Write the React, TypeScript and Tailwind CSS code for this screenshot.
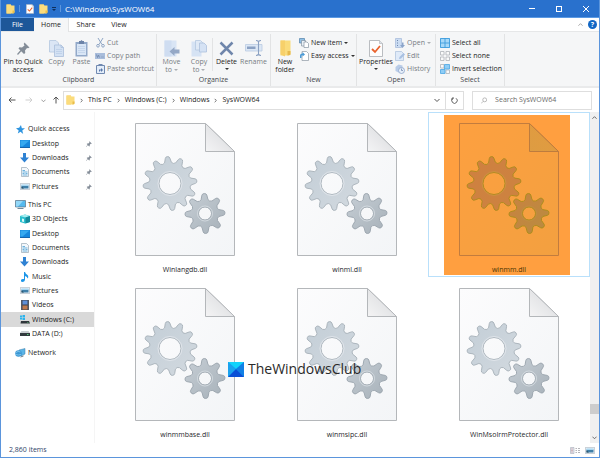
import React from "react";

type IconProps = { className?: string };

/* ---------- small icons ---------- */

const Folder = ({ className = "h-[10px] w-[9px]" }: IconProps) => (
  <svg viewBox="0 0 18 20" className={className}>
    <path d="M1 1h9v18H1z" fill="#f4cf63" />
    <path d="M1 1h8l2 2h6v13l-2 3H1z" fill="#fbdc7c" />
    <path d="M13 13h4v5l-4 1z" fill="#e9bd4a" />
  </svg>
);

const CheckPage = ({ className = "h-[10px] w-[8px]" }: IconProps) => (
  <svg viewBox="0 0 28 34" className={className}>
    <path d="M1 1h20l6 6v26H1z" fill="#fdfdfd" stroke="#a9adb3" strokeWidth="1.6" />
    <path d="M21 1v6h6" fill="#dfe3e8" stroke="#a9adb3" strokeWidth="1.2" />
    <path d="M6 18l6 6 10-12" fill="none" stroke="#e9622d" strokeWidth="3.6" />
  </svg>
);

const Pin = ({ className = "h-[13px] w-[13px]", color = "#848d98" }: IconProps & { color?: string }) => (
  <svg viewBox="0 0 26 26" className={className}>
    <path d="M15 1l10 10-3 1.500-2-.5-4 5 .5 5-2.500 2L3 13l2-2.500 5 .5 5-4-1.500-3z" fill={color} />
    <path d="M9 16L1 25" stroke={color} strokeWidth="2.400" />
  </svg>
);

const CopyIcon = () => (
  <svg viewBox="0 0 30 34" className="h-[17px] w-[15px]">
    <path d="M1 1h13l5 5v18H1z" fill="#dbe6f5" stroke="#b3c6e0" strokeWidth="1.600" />
    <path d="M11 10h13l5 5v18H11z" fill="#d3e1f3" stroke="#a9bedb" strokeWidth="1.600" />
    <path d="M24 10v5h5" fill="none" stroke="#a9bedb" strokeWidth="1.500" />
    <path d="M14 19h12M14 23h12M14 27h12" stroke="#b7cbe5" strokeWidth="1.400" />
  </svg>
);

const PasteIcon = () => (
  <svg viewBox="0 0 26 34" className="h-[17px] w-[13px]">
    <path d="M1 4h24v29H1z" fill="#92a9c9" />
    <path d="M4 8h18v22H4z" fill="#d9e6f6" />
    <path d="M8 2h3l2-2 2 2h3v6H8z" fill="#6c83a8" />
    <path d="M6 13h14M6 17h14M6 21h14M6 25h14" stroke="#b9cde6" strokeWidth="1.300" />
  </svg>
);

const Scissors = () => (
  <svg viewBox="0 0 18 20" className="h-[10px] w-[9px]" fill="none" stroke="#8fa5c4" strokeWidth="2">
    <path d="M4 0l8 13M14 0L6 13" />
    <circle cx="4" cy="15.500" r="2.700" />
    <circle cx="14" cy="15.500" r="2.700" />
  </svg>
);

const CopyPathIcon = () => (
  <svg viewBox="0 0 20 12" className="h-[6px] w-[10px]">
    <path d="M0 0h20v12H0z" fill="#a9bddb" />
    <path d="M3 3l2 6 2-5 2 5M12 8h1M15 8h2" stroke="#6a83aa" strokeWidth="1.500" fill="none" />
  </svg>
);

const ShortcutIcon = () => (
  <svg viewBox="0 0 18 20" className="h-[10px] w-[9px]">
    <path d="M1 3h16v16H1z" fill="#e3edf9" stroke="#7089b0" strokeWidth="2" />
    <path d="M5 0h8v4H5z" fill="#7089b0" />
    <path d="M6 15v-4h4V8l4 4-4 4v-3H8v2z" fill="#5877a8" />
  </svg>
);

const MoveToIcon = () => (
  <svg viewBox="0 0 32 34" className="h-[17px] w-[16px]">
    <path d="M1 1h24v32H1z" fill="#d9e5f5" />
    <path d="M1 1h14v32H1z" fill="#cfddf1" />
    <path d="M11 23l10-9v5h10v8H21v5z" fill="#95a8c6" />
  </svg>
);

const CopyToIcon = () => (
  <svg viewBox="0 0 32 34" className="h-[17px] w-[16px]">
    <path d="M1 3h20v30H1z" fill="#d6e3f4" />
    <path d="M9 1h10l4 4v15H9z" fill="#dfe9f6" stroke="#b2c5df" strokeWidth="1.500" />
    <path d="M17 6h9l5 5v13H17z" fill="#d5e2f4" stroke="#a9bedb" strokeWidth="1.500" />
  </svg>
);

const DeleteIcon = () => (
  <svg viewBox="0 0 30 30" className="h-[15px] w-[15px]">
    <path d="M3 3l24 24M27 3L3 27" stroke="#6f86ab" strokeWidth="5" />
  </svg>
);

const RenameIcon = () => (
  <svg viewBox="0 0 36 32" className="h-[16px] w-[18px]">
    <path d="M1 9h33v13H1z" fill="#dce7f5" stroke="#b6c8e0" strokeWidth="1.500" />
    <path d="M4 13h17v5H4z" fill="#8ba1c3" />
    <path d="M22 1q4 0 5 3 1-3 5-3M27 3v26M22 31q4 0 5-3 1 3 5 3" fill="none" stroke="#8ba1c3" strokeWidth="2.200" />
  </svg>
);

const NewFolderIcon = () => (
  <svg viewBox="0 0 22 34" className="h-[17px] w-[11px]">
    <path d="M1 1h20v26l-4 4H1z" fill="#fadb7a" />
    <path d="M1 1h9v32l-9-4z" fill="#f7d06a" />
    <path d="M15 22h6v8l-6 1z" fill="#e7b94c" />
  </svg>
);

const NewItemIcon = () => (
  <svg viewBox="0 0 20 20" className="h-[10px] w-[10px]">
    <path d="M1 1h10v9H1z" fill="#8fc0e6" stroke="#5a87ad" strokeWidth="1.500" />
    <path d="M5 5h8v11H5z" fill="#e9f0f6" stroke="#7f8d9b" strokeWidth="1.300" />
    <path d="M10 8h6l3 3v8h-9z" fill="#fff" stroke="#7f8d9b" strokeWidth="1.300" />
  </svg>
);

const EasyAccessIcon = () => (
  <svg viewBox="0 0 20 20" className="h-[10px] w-[10px]">
    <path d="M6 1h9l4 4v14H6z" fill="#fff" stroke="#8d98a3" strokeWidth="1.400" />
    <path d="M2 14V9q0-4 5-4V2l5 5-5 4V8q-2 0-2 2v4z" fill="#4a9ad6" />
  </svg>
);

const OpenIcon = () => (
  <svg viewBox="0 0 20 20" className="h-[10px] w-[10px]">
    <path d="M1 1h12v18H1z" fill="#cbdcf2" stroke="#9db4d5" strokeWidth="1.300" />
    <path d="M4 5h2M4 10h2M4 15h2" stroke="#6d86ad" strokeWidth="2" />
    <path d="M10 14h4v-5h3v5h3l-5 6z" fill="#8ba4ca" />
  </svg>
);

const EditIcon = () => (
  <svg viewBox="0 0 20 20" className="h-[10px] w-[10px]">
    <path d="M1 1h12l4 4v14H1z" fill="#dfeaf8" stroke="#a9bedb" strokeWidth="1.400" />
    <path d="M8 16l1-4 8-8 3 3-8 8z" fill="#a8c0e2" />
  </svg>
);

const HistoryIcon = () => (
  <svg viewBox="0 0 20 20" className="h-[10px] w-[10px]">
    <path d="M1 6l6-5 8 2v10L7 17l-6-3z" fill="#b9cce8" />
    <circle cx="13" cy="13" r="6" fill="#e7effa" stroke="#8ba4ca" strokeWidth="1.600" />
    <path d="M13 9v4h3" fill="none" stroke="#6d86ad" strokeWidth="1.500" />
  </svg>
);

const SelectAllIcon = () => (
  <svg viewBox="0 0 20 20" className="h-[10px] w-[10px]">
    <path d="M0 0h20v20H0z" fill="#a6d8f8" />
    <path d="M10 0v20M0 10h20M1 1h18v18H1z" fill="none" stroke="#3e9ddd" strokeWidth="1.800" />
  </svg>
);

const SelectNoneIcon = () => (
  <svg viewBox="0 0 20 20" className="h-[10px] w-[10px]" fill="#fafafa" stroke="#aeb3b8" strokeWidth="1.600">
    <path d="M1 1h7v7H1zM12 1h7v7h-7zM1 12h7v7H1zM12 12h7v7h-7z" />
  </svg>
);

const InvertIcon = () => (
  <svg viewBox="0 0 20 20" className="h-[10px] w-[10px]" strokeWidth="1.600">
    <path d="M1 1h7v7H1zM12 12h7v7h-7z" fill="#fafafa" stroke="#aeb3b8" />
    <path d="M9 1h10v9H9zM1 11h9v8H1z" fill="#8fcdf6" stroke="#4aa6e3" />
  </svg>
);

const Arrow = ({ dir, color }: { dir: "left" | "right" | "up"; color: string }) => (
  <svg viewBox="0 0 16 16" className="h-[8px] w-[8px]" fill="none" stroke={color} strokeWidth="2">
    {dir === "left" && <path d="M15 8H2M7 3L2 8l5 5" />}
    {dir === "right" && <path d="M1 8h13M9 3l5 5-5 5" />}
    {dir === "up" && <path d="M8 15V2M3 7l5-5 5 5" />}
  </svg>
);

const Chevron = ({ dir = "down", color = "#555", className = "h-[6px] w-[6px]" }: IconProps & { dir?: "down" | "up" | "right"; color?: string }) => (
  <svg viewBox="0 0 12 12" className={className} fill="none" stroke={color} strokeWidth="2">
    {dir === "down" && <path d="M1 4l5 5 5-5" />}
    {dir === "up" && <path d="M1 9l5-5 5 5" />}
    {dir === "right" && <path d="M4 2l4 4-4 4" />}
  </svg>
);

const Caret = ({ color = "#333" }: { color?: string }) => (
  <svg viewBox="0 0 8 4" className="h-[2px] w-[4px]">
    <path d="M0 0h8L4 4z" fill={color} />
  </svg>
);

/* ---------- navigation icons ---------- */

const StarIcon = () => (
  <svg viewBox="0 0 20 20" className="h-[9px] w-[9px]">
    <path d="M11 0l2 7 7 0-6 5 2 8-6-5-6 4 2-7-6-5 7-1z" fill="#2f95e0" />
  </svg>
);
const DesktopIcon = () => (
  <svg viewBox="0 0 20 16" className="h-[8px] w-[10px]">
    <path d="M0 0h20v15H0z" fill="#1787dd" />
    <path d="M1 1h18L5 13H1z" fill="#36a9f0" />
    <path d="M0 14h20v2H0z" fill="#1565ae" />
  </svg>
);
const DownloadIcon = () => (
  <svg viewBox="0 0 18 20" className="h-[10px] w-[9px]">
    <path d="M6 0h6v9h6l-9 10-9-10h6z" fill="#2f82d3" />
  </svg>
);
const DocumentIcon = () => (
  <svg viewBox="0 0 16 20" className="h-[10px] w-[8px]">
    <path d="M1 1h10l4 4v14H1z" fill="#f4f8fb" stroke="#9aa9b5" strokeWidth="1.400" />
    <path d="M3 7h5M3 10h10M3 13h4M9 13h4M3 16h10" stroke="#55a7d8" strokeWidth="1.700" />
  </svg>
);
const PictureIcon = () => (
  <svg viewBox="0 0 20 14" className="h-[7px] w-[10px]">
    <path d="M.7.700h18.600v12.600H.7z" fill="#e9f2f8" stroke="#aab4bc" strokeWidth="1.300" />
    <path d="M3 5h14v6H3z" fill="#3f7fa8" />
    <path d="M3 3h14v3H3z" fill="#a9d6f0" />
    <path d="M3 11V7l5 4z" fill="#29495c" />
  </svg>
);
const PcIcon = () => (
  <svg viewBox="0 0 22 20" className="h-[10px] w-[11px]">
    <path d="M1 1h20v13H1z" fill="#55b9ee" stroke="#5b7385" strokeWidth="1.400" />
    <path d="M2 2h14L6 13H2z" fill="#93d8f8" />
    <path d="M5 16h12v2H5z" fill="#71899a" />
  </svg>
);
const CubeIcon = () => (
  <svg viewBox="0 0 20 20" className="h-[10px] w-[10px]">
    <path d="M0 4l10-3 10 3v12l-10 3-10-3z" fill="#2cc0cf" />
    <path d="M0 4l10-3 10 3-9 3z" fill="#a5edf0" />
    <path d="M11 7l9-3v12l-9 3z" fill="#138a9c" />
    <path d="M4 9l4 1v6l-4-1z" fill="#d7f7f8" />
  </svg>
);
const MusicIcon = () => (
  <svg viewBox="0 0 16 20" className="h-[10px] w-[8px]">
    <path d="M6 0h2q1 4 5 6 3 3 0 7 0-4-5-5v8q-1 4-5 4t-3-4q1-3 6-2z" fill="#1d96e8" />
  </svg>
);
const VideoIcon = () => (
  <svg viewBox="0 0 16 20" className="h-[10px] w-[8px]">
    <path d="M0 0h16v20H0z" fill="#3a3f4a" />
    <path d="M3 1h10v8H3z" fill="#5f8fd8" />
    <path d="M3 11h10v8H3z" fill="#c07a4e" />
    <path d="M1.500 1v19M14.500 1v19" stroke="#b5bac4" strokeWidth="1.200" strokeDasharray="2 2" />
  </svg>
);
const SystemDriveIcon = () => (
  <svg viewBox="0 0 20 18" className="h-[9px] w-[10px]">
    <path d="M0 1h4v4H0zM5 0h5v5H5zM0 6h4v3H0zM5 6h5v4H5z" fill="#29b3ee" />
    <path d="M2 12h16l2 5H1z" fill="#30363b" />
    <path d="M14 14h3v1h-3z" fill="#58d27a" />
  </svg>
);
const DriveIcon = () => (
  <svg viewBox="0 0 20 10" className="h-[5px] w-[10px]">
    <path d="M3 0h14l3 4H0z" fill="#c9cdd0" />
    <path d="M0 4h20v6H0z" fill="#33393e" />
    <path d="M14 6h3v2h-3z" fill="#58d27a" />
  </svg>
);
const NetworkIcon = () => (
  <svg viewBox="0 0 22 20" className="h-[10px] w-[11px]">
    <path d="M8 4l12-3v11l-8 4z" fill="#5ab4e6" stroke="#3f7ea8" />
    <circle cx="7" cy="11" r="6.500" fill="#3a97d4" />
    <path d="M2 9q4-4 9-1M1 13q6 2 11 0" stroke="#9bd6f5" strokeWidth="1.400" fill="none" />
    <path d="M11 18l6-2" stroke="#70818e" strokeWidth="2" />
  </svg>
);

/* ---------- DLL file artwork ---------- */

function gearPath(cx: number, cy: number, outer: number, root: number, hole: number, teeth: number, offset: number) {
  const at = (r: number, deg: number) => {
    const a = (deg * Math.PI) / 180;
    return `${(cx + r * Math.cos(a)).toFixed(2)} ${(cy + r * Math.sin(a)).toFixed(2)}`;
  };
  const step = 360 / teeth;
  let d = "";
  for (let i = 0; i < teeth; i++) {
    const c = offset + i * step;
    d += `${i === 0 ? "M" : "L"}${at(root + 0.800, c - step * 0.310)}`;
    d += `L${at(outer - 1.500, c - step * 0.170)}`;
    d += `Q${at(outer, c - step * 0.140)} ${at(outer, c)}`;
    d += `Q${at(outer, c + step * 0.140)} ${at(outer - 1.500, c + step * 0.170)}`;
    d += `L${at(root + 0.800, c + step * 0.310)}`;
    d += `Q${at(root - 1, c + step * 0.500)} ${at(root + 0.800, c + step * 0.690)}`;
  }
  return `${d}ZM${cx + hole} ${cy}A${hole} ${hole} 0 1 0 ${cx - hole} ${cy}A${hole} ${hole} 0 1 0 ${cx + hole} ${cy}Z`;
}

const bigGear = gearPath(35, 60.500, 27, 20.500, 11, 12, -5.500);
const smallGear = gearPath(70, 90.500, 20, 13.500, 6.500, 8, -2);

const DllArt = ({ id, marked }: { id: string; marked?: boolean }) => (
  <svg viewBox="0 0 100 133" className="relative h-[133px] w-[100px]">
    <defs>
      <linearGradient id={`${id}-page`} x1="0" y1="0" x2="1" y2="1">
        <stop offset="0" stopColor={marked ? "#fda040" : "#fcfcfd"} />
        <stop offset="1" stopColor={marked ? "#f3a040" : "#f3f5f7"} />
      </linearGradient>
      <linearGradient id={`${id}-fold`} x1="0" y1="1" x2="1" y2="0">
        <stop offset="0" stopColor={marked ? "#dd9c42" : "#f4f4f5"} />
        <stop offset="1" stopColor={marked ? "#e39b3f" : "#d4d6d9"} />
      </linearGradient>
      <linearGradient id={`${id}-big`} x1="0" y1="0" x2="1" y2="1">
        <stop offset="0" stopColor={marked ? "#cf8040" : "#c3ced7"} />
        <stop offset="1" stopColor={marked ? "#cc8340" : "#d2d9df"} />
      </linearGradient>
      <linearGradient id={`${id}-small`} x1="0" y1="0" x2="1" y2="1">
        <stop offset="0" stopColor={marked ? "#c98240" : "#c6ced5"} />
        <stop offset="1" stopColor={marked ? "#b88c40" : "#a7b1b9"} />
      </linearGradient>
    </defs>
    <path d="M.5.500h70l29 28v104H.5z" fill={`url(#${id}-page)`} stroke={marked ? "#c27c3e" : "#b4b7ba"} />
    <path d="M70.500.500v28h29z" fill={`url(#${id}-fold)`} stroke={marked ? "#bd7c3e" : "#b4b7ba"} strokeLinejoin="round" />
    <path d={bigGear} fill={`url(#${id}-big)`} fillRule="evenodd" stroke={marked ? "#a98a1c" : "#a6b0b8"} strokeWidth="0.900" />
    <circle cx="35" cy="60.500" r="12" fill="none" stroke={marked ? "#cc9440" : "#e4e9ed"} strokeWidth="0.800" />
    <path d={smallGear} fill={`url(#${id}-small)`} fillRule="evenodd" stroke={marked ? "#a88c18" : "#98a3ab"} strokeWidth="0.900" />
    <circle cx="70" cy="90.500" r="7.500" fill="none" stroke={marked ? "#c09040" : "#d9dfe4"} strokeWidth="0.800" />
  </svg>
);

/* ---------- ribbon ---------- */

const BigCommand = ({ icon, lines, caret, dim, width }: { icon: React.ReactNode; lines: string[]; caret?: "own" | "inline"; dim?: boolean; width: string }) => (
  <button className={`flex shrink-0 flex-col items-center pt-1 ${width} ${dim ? "text-[#777c83]" : "text-[#1c1c1c]"}`}>
    <span className="flex h-[20px] items-center justify-center">{icon}</span>
    {lines.map((line, i) => (
      <span key={line} className="flex items-center gap-[2px] whitespace-nowrap leading-[8px]">
        {line}
        {caret === "inline" && i === lines.length - 1 && <Caret color="#a9adb2" />}
      </span>
    ))}
    {caret === "own" && (
      <span className="flex h-[6px] items-center">
        <Caret />
      </span>
    )}
  </button>
);

const SmallCommand = ({ icon, label, caret, dim }: { icon: React.ReactNode; label: string; caret?: boolean; dim?: boolean }) => (
  <button className={`flex h-[13px] items-center gap-[2px] whitespace-nowrap ${dim ? "text-[#777c83]" : "text-[#1c1c1c]"}`}>
    <span className="flex w-[10px] justify-center">{icon}</span>
    {label}
    {caret && <Caret color={dim ? "#a9adb2" : "#333"} />}
  </button>
);

const Group = ({ label, width, children }: { label: string; width: string; children: React.ReactNode }) => (
  <section aria-label={label} className={`mt-[2px] flex shrink-0 flex-col ${width}`}>
    <div className="flex flex-1 border-r border-[#e2e3e4]">{children}</div>
    <div className="border-r border-[#e2e3e4] pb-px text-center leading-[10px] text-[#45494e]">{label}</div>
  </section>
);

const Ribbon = () => (
  <div className="flex h-[56px] border-b-2 border-[#e9eaeb] bg-[#f5f6f7]">
    <Group label="Clipboard" width="w-[156px]">
      <BigCommand width="w-[44px]" icon={<Pin />} lines={["Pin to Quick", "access"]} />
      <BigCommand width="w-[23px]" dim icon={<CopyIcon />} lines={["Copy"]} />
      <BigCommand width="w-[27px]" dim icon={<PasteIcon />} lines={["Paste"]} />
      <div className="flex flex-col pt-[2px]">
        <SmallCommand dim icon={<Scissors />} label="Cut" />
        <SmallCommand dim icon={<CopyPathIcon />} label="Copy path" />
        <SmallCommand dim icon={<ShortcutIcon />} label="Paste shortcut" />
      </div>
    </Group>
    <Group label="Organize" width="w-[114px]">
      <BigCommand width="w-[29px]" dim icon={<MoveToIcon />} lines={["Move", "to"]} caret="inline" />
      <BigCommand width="w-[26px]" dim icon={<CopyToIcon />} lines={["Copy", "to"]} caret="inline" />
      <div className="my-1 border-r border-[#e2e3e4]" />
      <BigCommand width="w-[27px]" icon={<DeleteIcon />} lines={["Delete"]} caret="own" />
      <BigCommand width="w-[27px]" dim icon={<RenameIcon />} lines={["Rename"]} />
    </Group>
    <Group label="New" width="w-[86px]">
      <BigCommand width="w-[28px]" icon={<NewFolderIcon />} lines={["New", "folder"]} />
      <div className="flex flex-col pt-[2px]">
        <SmallCommand icon={<NewItemIcon />} label="New item" caret />
        <SmallCommand icon={<EasyAccessIcon />} label="Easy access" caret />
      </div>
    </Group>
    <Group label="Open" width="w-[79px]">
      <BigCommand width="w-[38px]" icon={<CheckPage className="h-[17px] w-[14px]" />} lines={["Properties"]} caret="own" />
      <div className="flex flex-col pt-[2px]">
        <SmallCommand dim icon={<OpenIcon />} label="Open" caret />
        <SmallCommand dim icon={<EditIcon />} label="Edit" />
        <SmallCommand dim icon={<HistoryIcon />} label="History" />
      </div>
    </Group>
    <Group label="Select" width="w-[69px]">
      <div className="flex flex-col pl-1 pt-[2px]">
        <SmallCommand icon={<SelectAllIcon />} label="Select all" />
        <SmallCommand icon={<SelectNoneIcon />} label="Select none" />
        <SmallCommand icon={<InvertIcon />} label="Invert selection" />
      </div>
    </Group>
  </div>
);

/* ---------- navigation pane ---------- */

type NavItem = { label: string; icon: React.ReactNode; pinned?: boolean; active?: boolean };

const quick: NavItem[] = [
  { label: "Desktop", icon: <DesktopIcon />, pinned: true },
  { label: "Downloads", icon: <DownloadIcon />, pinned: true },
  { label: "Documents", icon: <DocumentIcon />, pinned: true },
  { label: "Pictures", icon: <PictureIcon />, pinned: true },
];

const pc: NavItem[] = [
  { label: "3D Objects", icon: <CubeIcon /> },
  { label: "Desktop", icon: <DesktopIcon /> },
  { label: "Documents", icon: <DocumentIcon /> },
  { label: "Downloads", icon: <DownloadIcon /> },
  { label: "Music", icon: <MusicIcon /> },
  { label: "Pictures", icon: <PictureIcon /> },
  { label: "Videos", icon: <VideoIcon /> },
  { label: "Windows (C:)", icon: <SystemDriveIcon />, active: true },
  { label: "DATA (D:)", icon: <DriveIcon /> },
];

const NavRoot = ({ label, icon }: { label: string; icon: React.ReactNode }) => (
  <a href="#" className="flex items-center gap-[2px] pl-[13px]">
    <span className="flex w-[12px] justify-center">{icon}</span>
    {label}
  </a>
);

const NavRow = ({ label, icon, pinned, active }: NavItem) => (
  <a href="#" className={`flex items-center gap-[2px] pl-[18px] pr-[2px] ${active ? "bg-[#d9d9d9]" : ""}`}>
    <span className="flex w-[11px] justify-center">{icon}</span>
    <span className="flex-1">{label}</span>
    {pinned && <Pin className="h-[6px] w-[6px]" />}
  </a>
);

const NavPane = () => (
  <nav className="w-[94px] shrink-0 border-r border-[#f5f5f5] pt-[10px]">
    <div className="grid h-[72px] auto-rows-fr">
      <NavRoot label="Quick access" icon={<StarIcon />} />
      {quick.map((item) => (
        <NavRow key={item.label} {...item} />
      ))}
    </div>
    <div className="mt-1 grid h-[143px] auto-rows-fr">
      <NavRoot label="This PC" icon={<PcIcon />} />
      {pc.map((item) => (
        <NavRow key={item.label} {...item} />
      ))}
    </div>
    <div className="mt-1 grid h-[15px]">
      <NavRoot label="Network" icon={<NetworkIcon />} />
    </div>
  </nav>
);

/* ---------- files ---------- */

const files = ["Winlangdb.dll", "winml.dll", "winmm.dll", "winmmbase.dll", "winmsipc.dll", "WinMsoIrmProtector.dll"];
const selectedFile = "winmm.dll";

const FileTile = ({ name, id }: { name: string; id: string }) => {
  const marked = name === selectedFile;
  return (
    <button className={`relative flex h-[165px] flex-col items-center border pt-[10px] ${marked ? "border-[#b9e0fb] text-[#4d3500]" : "border-transparent text-[#1f1f2c]"}`}>
      {marked && <span className="absolute bottom-px left-[15px] right-[19px] top-[2px] bg-[#ff9f40]" />}
      <DllArt id={id} marked={marked} />
      <span className="relative mt-2 leading-[12px]">{name}</span>
    </button>
  );
};

const Logo = () => (
  <div className="pointer-events-none absolute left-[133px] top-[248px] flex items-center gap-1">
    <svg viewBox="0 0 16 15" className="h-[15px] w-[16px]">
      <path d="M0 0h16v15H0z" fill="#19a7f2" />
      <path d="M0 0h16L8 7z" fill="#12d3fb" />
      <path d="M0 0l8 7-8 8z" fill="#1ba2ee" />
      <path d="M16 0L8 7l8 8z" fill="#1180e6" />
      <path d="M0 15l8-8 8 8z" fill="#0a4fd6" />
    </svg>
    <span className="text-[14px] leading-[18px] text-[#2a2a2a]">TheWindowsClub</span>
  </div>
);

/* ---------- bars ---------- */

const TitleBar = () => (
  <header className="flex h-[18px] items-center border-b border-[#5b9ae4] bg-[#2971cd] pl-[5px] text-white">
    <Folder />
    <span className="mx-1 h-[7px] w-px bg-[#5f97dd]" />
    <button aria-label="Properties" className="ml-[2px]">
      <CheckPage />
    </button>
    <button aria-label="New folder" className="ml-[5px]">
      <Folder />
    </button>
    <button aria-label="Customize toolbar" className="ml-1 flex flex-col items-center gap-px">
      <span className="h-px w-[4px] bg-[#0f2f5c]" />
      <Caret color="#0f2f5c" />
    </button>
    <span className="mx-1 h-[7px] w-px bg-[#5f97dd]" />
    <h1 className="flex-1 text-[8px]">C:\Windows\SysWOW64</h1>
    <button aria-label="Minimize" className="flex w-[27px] justify-center">
      <span className="h-px w-[6px] bg-white" />
    </button>
    <button aria-label="Maximize" className="flex w-[27px] justify-center">
      <span className="h-[6px] w-[6px] border border-white" />
    </button>
    <button aria-label="Close" className="flex w-[27px] justify-center">
      <svg viewBox="0 0 12 12" className="h-[6px] w-[6px]" stroke="#fff" strokeWidth="2">
        <path d="M0 0l12 12M12 0L0 12" />
      </svg>
    </button>
  </header>
);

const Tabs = () => (
  <div className="flex h-[14px] items-stretch border-b border-[#e6e7e8] bg-white text-[#222]">
    <button className="w-[33px] bg-[#1d5799] text-white">File</button>
    <button className="-mb-px w-[35px] border-r border-[#e2e3e4] bg-[#f5f6f7]">Home</button>
    <button className="w-[34px]">Share</button>
    <button className="w-[32px]">View</button>
    <span className="flex-1" />
    <button aria-label="Collapse ribbon" className="mr-[5px]">
      <Chevron dir="up" color="#9a9a9a" className="h-[5px] w-[5px]" />
    </button>
    <button aria-label="Help" className="mr-[2px] h-[9px] w-[9px] self-center rounded-full bg-[#1267c4] font-bold leading-[9px] text-white">
      ?
    </button>
  </div>
);

const AddressRow = () => (
  <div className="flex h-[24px] items-center pr-[7px]">
    <div className="flex w-[62px] items-center pl-[7px]">
      <button aria-label="Back">
        <Arrow dir="left" color="#555" />
      </button>
      <button aria-label="Forward" className="ml-[9px]">
        <Arrow dir="right" color="#cfcfcf" />
      </button>
      <button aria-label="Recent locations" className="ml-[8px]">
        <Chevron className="h-[5px] w-[5px]" color="#888" />
      </button>
      <button aria-label="Up" className="ml-[6px]">
        <Arrow dir="up" color="#555" />
      </button>
    </div>
    <div className="flex h-[19px] flex-1 items-stretch border border-[#dedede] text-[#222]">
      <div className="flex flex-1 items-center pl-[2px]">
        <Folder />
        {["This PC", "Windows (C:)", "Windows", "SysWOW64"].map((part) => (
          <span key={part} className="flex items-center">
            <span className="flex w-[13px] justify-center">
              <Chevron dir="right" className="h-[5px] w-[5px]" />
            </span>
            <a href="#">{part}</a>
          </span>
        ))}
      </div>
      <button aria-label="Previous locations" className="flex w-[16px] items-center justify-center">
        <Chevron />
      </button>
      <button aria-label="Refresh" className="flex w-[18px] items-center justify-center border-l border-[#dedede]">
        <svg viewBox="0 0 14 14" className="h-[7px] w-[7px]" fill="none" stroke="#555" strokeWidth="1.800">
          <path d="M4 2.500A5.500 5.500 0 1 0 10 2.500M4 0v4H0" />
        </svg>
      </button>
    </div>
    <label className="ml-2 flex h-[19px] w-[120px] items-center border border-[#dedede] pl-[8px]">
      <svg viewBox="0 0 14 14" className="h-[7px] w-[7px]" fill="none" stroke="#999" strokeWidth="1.500">
        <circle cx="8.500" cy="5.500" r="4.500" />
        <path d="M5 9l-5 5" />
      </svg>
      <input aria-label="Search" placeholder="Search SysWOW64" className="ml-[8px] w-full min-w-0 bg-transparent outline-none placeholder:text-[#6a6a6a]" />
    </label>
  </div>
);

const ScrollBar = () => (
  <div className="flex w-[9px] flex-col items-center bg-[#f0f0f0]">
    <button aria-label="Scroll up" className="flex h-[11px] items-center">
      <Chevron dir="up" className="h-[5px] w-[5px]" />
    </button>
    <span className="flex-1" />
    <span className="h-[10px] w-full bg-[#cdcdcd]" />
    <span className="h-[18px]" />
    <button aria-label="Scroll down" className="flex h-[11px] items-center">
      <Chevron className="h-[5px] w-[5px]" />
    </button>
  </div>
);

const StatusBar = () => (
  <footer className="flex h-[14px] items-center gap-[5px] pl-[8px] pr-[4px] text-[#2f4468]">
    <span>2,860 items</span>
    <span className="flex-1" />
    <button aria-label="Details view">
      <svg viewBox="0 0 20 14" className="h-[7px] w-[10px]">
        <path d="M1 1h7v12H1z" fill="#e3e5ee" stroke="#9ba0ad" />
        <path d="M3 4h2M3 7h2M3 10h2" stroke="#b06a6a" strokeWidth="1.500" />
        <path d="M11 3h3M16 3h4M11 7h3M16 7h4M11 11h3M16 11h4" stroke="#8d8d95" strokeWidth="1.300" />
      </svg>
    </button>
    <button aria-label="Large icons view">
      <PictureIcon />
    </button>
  </footer>
);

export default function App() {
  return (
    <div className="flex min-h-screen flex-col border-x border-b border-[#5b95dc] bg-white font-['Open_Sans','Noto_Sans',sans-serif] text-[7px] leading-[10px] text-[#1c1c1c]">
      <TitleBar />
      <Tabs />
      <Ribbon />
      <AddressRow />
      <div className="flex flex-1">
        <NavPane />
        <main className="relative flex-1 pl-[9px]">
          <div className="grid grid-cols-3">
            {files.map((name, i) => (
              <FileTile key={name} name={name} id={`dll${i}`} />
            ))}
          </div>
          <Logo />
        </main>
        <ScrollBar />
      </div>
      <StatusBar />
    </div>
  );
}
